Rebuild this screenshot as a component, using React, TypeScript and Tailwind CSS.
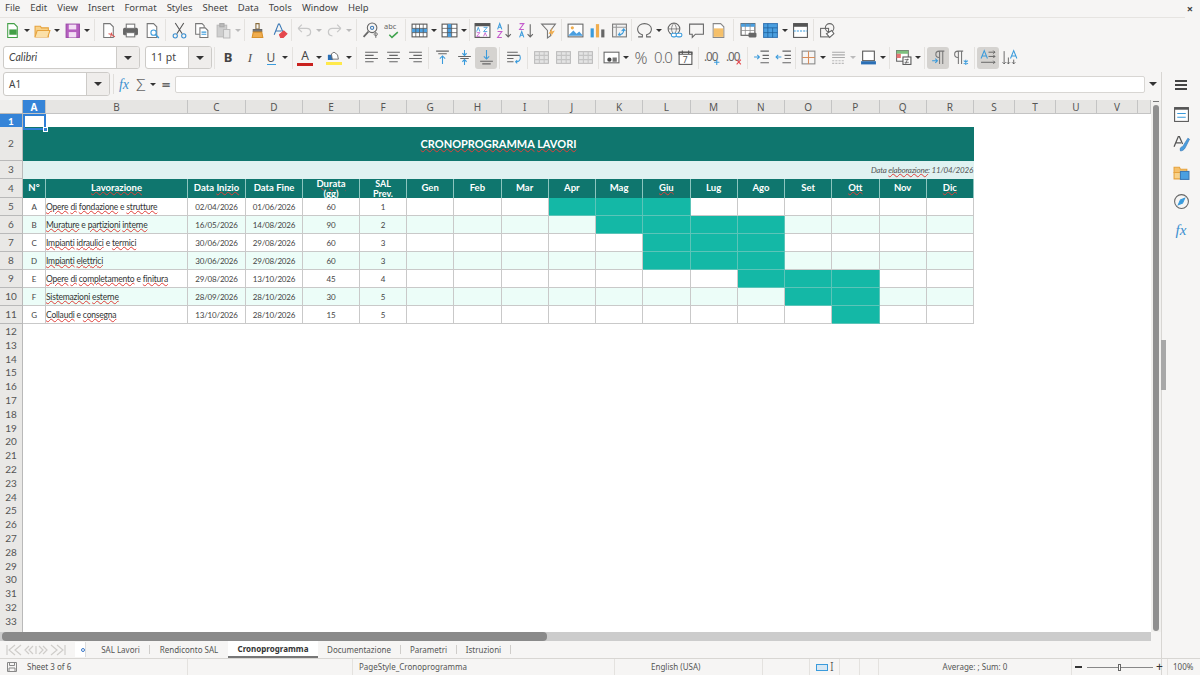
import React from 'react';

const GRID = 'grid grid-cols-[23px_23px_142px_58px_57px_57px_47px_repeat(12,47.25px)_41px_41px_41px_41px_13px]';
const LETTERS = ['A','B','C','D','E','F','G','H','I','J','K','L','M','N','O','P','Q','R','S','T','U','V',''];
const MONTHS = ['Gen','Feb','Mar','Apr','Mag','Giu','Lug','Ago','Set','Ott','Nov','Dic'];

const ROWS = [
  { n: 5, id: 'A', name: 'Opere di fondazione e strutture', start: '02/04/2026', end: '01/06/2026', days: '60', sal: '1', on: [3, 4, 5] },
  { n: 6, id: 'B', name: 'Murature e partizioni interne', start: '16/05/2026', end: '14/08/2026', days: '90', sal: '2', on: [4, 5, 6, 7] },
  { n: 7, id: 'C', name: 'Impianti idraulici e termici', start: '30/06/2026', end: '29/08/2026', days: '60', sal: '3', on: [5, 6, 7] },
  { n: 8, id: 'D', name: 'Impianti elettrici', start: '30/06/2026', end: '29/08/2026', days: '60', sal: '3', on: [5, 6, 7] },
  { n: 9, id: 'E', name: 'Opere di completamento e finitura', start: '29/08/2026', end: '13/10/2026', days: '45', sal: '4', on: [7, 8, 9] },
  { n: 10, id: 'F', name: 'Sistemazioni esterne', start: '28/09/2026', end: '28/10/2026', days: '30', sal: '5', on: [8, 9] },
  { n: 11, id: 'G', name: 'Collaudi e consegna', start: '13/10/2026', end: '28/10/2026', days: '15', sal: '5', on: [9] },
];

const EMPTY_ROWS = Array.from({ length: 22 }, (_, i) => i + 12);

const Wavy = ({ children }: { children: React.ReactNode }) => (
  <span className="underline decoration-wavy decoration-[#e0403a] decoration-[0.5px] underline-offset-0">{children}</span>
);

// the spell checker leaves the word "e" alone
const Checked = ({ text }: { text: string }) => (
  <>
    {text.split(' ').map((w, i) => (
      <React.Fragment key={i}>
        {i > 0 && ' '}
        {w === 'e' ? w : <Wavy>{w}</Wavy>}
      </React.Fragment>
    ))}
  </>
);

const Ic = ({ children }: { children: React.ReactNode }) => (
  <svg viewBox="0 0 16 16" className="w-[17px] h-[17px]" fill="none" stroke="#666" strokeWidth="1">{children}</svg>
);

const Tool = ({ active, children }: { active?: boolean; children: React.ReactNode }) => (
  <div className={`w-[22px] h-[22px] flex items-center justify-center shrink-0 rounded-[3px] ${active ? 'bg-[#d5d3d0]' : ''}`}>{children}</div>
);

const Arrow = ({ off }: { off?: boolean }) => (
  <div className="w-[8px] h-[22px] flex items-center justify-center shrink-0">
    <div className={`border-x-[3px] border-x-transparent border-t-[3px] ${off ? 'border-t-[#bbb]' : 'border-t-[#333]'}`} />
  </div>
);

const Sep = ({ className }: { className: string }) => (
  <div className={`h-[22px] flex items-center justify-center shrink-0 ${className}`}>
    <div className="w-px h-[22px] bg-[#e4e2df]" />
  </div>
);

const Grid3 = () => (
  <Ic>
    <rect x="1.5" y="2.5" width="13" height="11" fill="#e4e4e4" stroke="#bbb" />
    <path d="M1.5 6h13M1.5 10h13M6 2.5v11M10.5 2.5v11" stroke="#c4c4c4" />
  </Ic>
);

const Toolbar1 = () => (
  <div className="flex items-center h-[24px] pl-px">
    <Tool><Ic><path d="M3.5 1.5h6l3 3v10h-9z" fill="#fff" stroke="#43a047" /><rect x="5" y="7" width="7" height="5" fill="#43a047" stroke="none" /></Ic></Tool>
    <Arrow />
    <Tool><Ic><path d="M1 4h5l1 1.5h6.5V14H1z" fill="#f8d28a" stroke="#e6a23c" /><path d="M1 14l2-6h12l-2 6" fill="#fbe0a8" stroke="#e6a23c" /></Ic></Tool>
    <Arrow />
    <Tool><Ic><rect x="2" y="2" width="12.5" height="12.5" fill="#b65fc0" stroke="#9c4aa8" /><rect x="4.5" y="2.5" width="7" height="4.5" fill="#f3dff5" stroke="none" /><rect x="4.5" y="9.5" width="7" height="5" fill="#f3dff5" stroke="none" /></Ic></Tool>
    <Arrow />
    <Sep className="w-[6px]" />
    <Tool><Ic><path d="M3.5 1.5h6l3 3v10h-9z" fill="#fff" stroke="#777" /><path d="M8 11c2 0 4 1 6 3M11 10l-1 4" stroke="#d9534f" /></Ic></Tool>
    <Tool><Ic><rect x="1.5" y="6" width="13" height="6" rx="1" fill="#666" stroke="#666" /><rect x="4" y="2" width="8" height="4" fill="#fff" stroke="#777" /><rect x="4" y="10" width="8" height="4" fill="#fff" stroke="#777" /></Ic></Tool>
    <Tool><Ic><path d="M3 1.5h6l3 3v10H3z" fill="#fff" stroke="#777" /><circle cx="9" cy="10" r="2.5" stroke="#3a9bdc" /><path d="M11 12l3 3" stroke="#3a9bdc" strokeWidth="1.4" /></Ic></Tool>
    <Sep className="w-[5px]" />
    <Tool><Ic><path d="M4 1l6.5 10M12 1L5.5 11" stroke="#555" /><circle cx="4" cy="13" r="2" stroke="#3a8fd0" /><circle cx="12" cy="13" r="2" stroke="#3a8fd0" /></Ic></Tool>
    <Tool><Ic><path d="M2.5 1.5h6l2 2v8h-8z" fill="#fff" stroke="#777" /><path d="M6.5 5.5h5l2.5 2.5v6.5H6.5z" fill="#fff" stroke="#777" /><path d="M8 9.500h4.500M8 11.500h4.500" stroke="#3a9bdc" /></Ic></Tool>
    <Tool><Ic><rect x="2" y="3" width="9" height="11" fill="#cfcfcf" stroke="#bbb" /><path d="M8 7h6v8H8z" fill="#e6e6e6" stroke="#bbb" /><rect x="4.5" y="1.5" width="4" height="3" fill="#bbb" stroke="#aaa" /></Ic></Tool>
    <Arrow off />
    <Sep className="w-[4px]" />
    <Tool><Ic><path d="M6.5 1.5h3v5h-3z" stroke="#8a6d3b" /><path d="M4 7h8v2H4z" fill="#777" stroke="#666" /><path d="M4 9.500h8l1 5H3z" fill="#f0ad4e" stroke="#d8912c" /></Ic></Tool>
    <Tool><Ic><path d="M3 12L7 2h1l3.500 8M4.500 8.500h5.500" stroke="#3a78b5" /><path d="M8 12l4-3.500 3 2.500-3.500 3.500H9z" fill="#e5484d" stroke="#e5484d" /></Ic></Tool>
    <Sep className="w-[3px]" />
    <Tool><Ic><path d="M2 6l3.500-3.500M2 6l3.500 3.500M2 6h8c5 0 5 7 0 7" stroke="#c8c8c8" strokeWidth="1.2" /></Ic></Tool>
    <Arrow off />
    <Tool><Ic><path d="M14 6l-3.500-3.500M14 6l-3.500 3.500M14 6H6c-5 0-5 7 0 7" stroke="#c8c8c8" strokeWidth="1.2" /></Ic></Tool>
    <Arrow off />
    <Sep className="w-[6px]" />
    <Tool><Ic><circle cx="9.5" cy="5.5" r="4.5" stroke="#666" /><path d="M6 9l-4.500 5" stroke="#666" strokeWidth="1.6" /><circle cx="9.5" cy="5.5" r="1.5" stroke="#3a78b5" /><path d="M13 10v5M13 13a1.500 1.500 0 10-.1 0" stroke="#666" strokeWidth="0.8" /></Ic></Tool>
    <Tool><Ic><text x="0" y="7" fontSize="7" fill="#666" stroke="none">abc</text><path d="M5 12l2.500 2.500L13 9.500" stroke="#3fa34d" strokeWidth="1.4" /></Ic></Tool>
    <Sep className="w-[5px]" />
    <Tool><Ic><rect x="1" y="2" width="14" height="12" fill="#fff" stroke="#555" /><rect x="1" y="6" width="14" height="4" fill="#4a9fe0" stroke="none" /><path d="M1 6h14M1 10h14M4.500 2v12M8 2v12M11.500 2v12" stroke="#555" strokeWidth="0.7" /></Ic></Tool>
    <Arrow />
    <Tool><Ic><rect x="1" y="2" width="14" height="12" fill="#fff" stroke="#555" /><rect x="6" y="2" width="4" height="12" fill="#4a9fe0" stroke="none" /><path d="M1 6h14M1 10h14M6 2v12M10 2v12" stroke="#555" strokeWidth="0.7" /></Ic></Tool>
    <Arrow />
    <Sep className="w-[3px]" />
    <Tool><Ic><rect x="1" y="1.5" width="14" height="13" fill="#fff" stroke="#555" /><rect x="1" y="1.5" width="14" height="2.5" fill="#555" stroke="none" /><path d="M2.500 9l1.500-4 1.500 4M9 5h3.500L9 9h3.500" stroke="#3a9bdc" strokeWidth="0.8" /><path d="M2.500 10h3l-3 3.500h3M9 13.500l1.500-3.500 1.500 3.500" stroke="#c45ccc" strokeWidth="0.8" /></Ic></Tool>
    <Tool><Ic><path d="M1.500 7l2-5.500 2 5.500M2.300 5h2.400" stroke="#3a9bdc" /><path d="M1.500 9h4l-4 5.500h4" stroke="#c45ccc" /><path d="M11.500 2v12M9 11.500l2.500 2.500 2.500-2.500" stroke="#666" /></Ic></Tool>
    <Tool><Ic><path d="M1.500 1.500h4l-4 5.500h4" stroke="#c45ccc" /><path d="M1.500 14.500l2-5.500 2 5.500M2.300 12.500h2.400" stroke="#3a9bdc" /><path d="M11.500 2v12M9 11.500l2.500 2.500 2.500-2.500" stroke="#666" /></Ic></Tool>
    <Tool><Ic><path d="M1.500 2h13L10 8v5l-3 2V8z" stroke="#777" /><path d="M10 14l4-6-3 1 1-4-4 6h3z" fill="#f0ad4e" stroke="none" /></Ic></Tool>
    <Sep className="w-[5px]" />
    <Tool><Ic><rect x="1" y="2" width="14" height="12" fill="#fff" stroke="#666" /><circle cx="5" cy="5.5" r="1.5" fill="#f0ad4e" stroke="none" /><path d="M1 13l5-5 3 3 2.500-2 3.500 4z" fill="#4a9fe0" stroke="none" /></Ic></Tool>
    <Tool><Ic><rect x="1.5" y="6" width="3" height="8.5" fill="#3a9bdc" stroke="none" /><rect x="6.5" y="2" width="3" height="12.5" fill="#f0ad4e" stroke="none" /><rect x="11.5" y="7" width="3" height="7.5" fill="#666" stroke="none" /></Ic></Tool>
    <Tool><Ic><rect x="1.5" y="2" width="13" height="12" fill="#f2f2f2" stroke="#777" /><path d="M1.5 5h13M5 2v12" stroke="#999" /><path d="M7 12c3 0 5-2 5-5M10 8.500l2-2 1.500 2M8.500 10L7 12l2 1" stroke="#3a9bdc" /></Ic></Tool>
    <Sep className="w-[3px]" />
    <Tool><Ic><path d="M2 14h4v-2C3 11 1.500 9 1.500 6.500 1.500 3.500 4.500 1.500 8 1.500s6.500 2 6.500 5c0 2.500-1.500 4.500-4.500 5.500v2h4" stroke="#666" /></Ic></Tool>
    <Arrow />
    <Tool><Ic><circle cx="7.5" cy="6.5" r="5.5" stroke="#666" /><path d="M2 6.500h11M7.500 1c-3 3.500-3 7.500 0 11M7.500 1c3 3.500 3 7.500 0 11" stroke="#666" strokeWidth="0.7" /><rect x="5" y="10.5" width="5" height="3.5" rx="1.7" fill="#fff" stroke="#3a9bdc" /><rect x="9.5" y="10.5" width="5.5" height="3.5" rx="1.7" fill="#fff" stroke="#3a9bdc" /></Ic></Tool>
    <Tool><Ic><path d="M1.500 2h13v9.500H7L4 14.500v-3H1.500z" stroke="#666" /></Ic></Tool>
    <Tool><Ic><path d="M3 1.500h7l3 3v10H3z" fill="#fff" stroke="#888" /><rect x="3.5" y="6" width="9" height="8" fill="#f5c06a" stroke="none" /></Ic></Tool>
    <Sep className="w-[8px]" />
    <Tool><Ic><rect x="1" y="1.5" width="13" height="11" fill="#fff" stroke="#555" /><rect x="1" y="1.5" width="13" height="3" fill="#4a9fe0" stroke="none" /><path d="M5 1.500v11M9.500 1.500v11M1 8h13" stroke="#888" strokeWidth="0.7" /><rect x="8" y="10" width="7.5" height="4.5" rx="1" fill="#666" stroke="none" /></Ic></Tool>
    <Tool><Ic><rect x="1.5" y="1.5" width="13" height="13" fill="#4a9fe0" stroke="#3a78b5" /><path d="M5.500 1.500v13M1.500 5.500h13M10 5.500v9M1.500 10h13" stroke="#1d5f99" strokeWidth="0.7" /></Ic></Tool>
    <Arrow />
    <Tool><Ic><rect x="1.5" y="1.5" width="13" height="13" fill="#fff" stroke="#555" /><rect x="1.5" y="1.5" width="13" height="3" fill="#555" stroke="none" /><path d="M1.500 8.500h13" stroke="#3a9bdc" strokeDasharray="2 1" /></Ic></Tool>
    <Sep className="w-[5px]" />
    <Tool><Ic><rect x="1.5" y="6" width="7.5" height="8" stroke="#666" /><circle cx="10" cy="5.5" r="4" stroke="#666" /><path d="M7 11l5-3 2 3-4 3.500z" fill="#fff" stroke="#666" /></Ic></Tool>
  </div>
);

const Align = ({ d }: { d: string }) => <Tool><Ic><path d={d} stroke="#666" /></Ic></Tool>;

const Toolbar2 = () => (
  <div className="flex items-center h-[29px] pl-[3px]">
    <div className="w-[137px] h-[23px] flex bg-white border border-[#cdcbc8] rounded-[3px] overflow-hidden shrink-0">
      <div className="flex-1 pl-[5px] text-[10.5px] leading-[21px] italic font-['Lato',sans-serif] text-[#444]">Calibri</div>
      <div className="w-[23px] bg-[#efedeb] border-l border-[#cdcbc8] flex items-center justify-center"><div className="border-x-[4px] border-x-transparent border-t-[4px] border-t-[#333]" /></div>
    </div>
    <div className="w-[67px] h-[23px] ml-[5px] flex bg-white border border-[#cdcbc8] rounded-[3px] overflow-hidden shrink-0">
      <div className="flex-1 pl-[5px] text-[10.5px] leading-[21px] text-[#444]">11 pt</div>
      <div className="w-[23px] bg-[#efedeb] border-l border-[#cdcbc8] flex items-center justify-center"><div className="border-x-[4px] border-x-transparent border-t-[4px] border-t-[#333]" /></div>
    </div>
    <Sep className="w-[5px]" />
    <Tool><span className="font-bold text-[13px] text-[#444]">B</span></Tool>
    <Tool><span className="italic text-[13px] font-['Liberation_Serif',serif] text-[#555]">I</span></Tool>
    <div className="w-[20px] h-[22px] flex flex-col items-center justify-center shrink-0"><span className="text-[12px] leading-[13px] text-[#555]">U</span><div className="w-[9px] h-px bg-[#3a9bdc]" /></div>
    <Arrow />
    <Sep className="w-[6px]" />
    <div className="w-[20px] h-[22px] flex flex-col items-center justify-center shrink-0"><span className="text-[12px] leading-[14px] text-[#444]">A</span><div className="w-[16px] h-[3px] bg-[#c9211e]" /></div>
    <Arrow />
    <Tool><div className="flex flex-col items-center"><svg viewBox="0 0 16 12" className="w-[14px] h-[11px]" fill="none"><path d="M1 4h6v6H1z" fill="#2a6fb5" /><path d="M6 9l-1-6 3-2 4 3 1 5z" fill="#fff" stroke="#666" /></svg><div className="w-[16px] h-[3px] bg-[#ffe94a]" /></div></Tool>
    <Arrow />
    <Sep className="w-[7px]" />
    <Align d="M2 3h12M2 6h8M2 9h12M2 12h8" />
    <Align d="M2 3h12M4 6h8M2 9h12M4 12h8" />
    <Align d="M2 3h12M6 6h8M2 9h12M6 12h8" />
    <Sep className="w-[5px]" />
    <Tool><Ic><path d="M2 2h12M4 4.500h8" stroke="#666" /><path d="M8 14V7M5.500 9L8 6.500 10.500 9" stroke="#3a9bdc" /></Ic></Tool>
    <Tool><Ic><path d="M2 7h12M4 9h8" stroke="#666" /><path d="M8 1v5M6 4l2 2 2-2M8 15v-5M6 12l2-2 2 2" stroke="#3a9bdc" /></Ic></Tool>
    <Tool active><Ic><path d="M2 11.500h12M4 14h8" stroke="#666" /><path d="M8 1v8M5.500 7L8 9.500 10.500 7" stroke="#3a9bdc" /></Ic></Tool>
    <Sep className="w-[5px]" />
    <Tool><Ic><path d="M2 3h10M2 6h12M2 9h6M2 12h6" stroke="#666" /><path d="M14 6c1 3 0 6-3 6h-1M11.500 10.500L10 12l1.500 1.500" stroke="#3a9bdc" /></Ic></Tool>
    <Sep className="w-[6px]" />
    <Tool><Grid3 /></Tool>
    <Tool><Grid3 /></Tool>
    <Tool><Grid3 /></Tool>
    <Sep className="w-[4px]" />
    <Tool><Ic><rect x="1" y="3" width="14" height="10" fill="#fff" stroke="#666" /><circle cx="6" cy="10" r="2" fill="#444" stroke="none" /><rect x="9" y="8" width="4" height="4" fill="#777" stroke="none" /></Ic></Tool>
    <Arrow />
    <Tool><span className="text-[16px] font-light text-[#666]">%</span></Tool>
    <Tool><span className="text-[15px] font-light tracking-[-1px] text-[#666]">0.0</span></Tool>
    <Tool><Ic><rect x="2" y="3" width="12" height="11.5" fill="#fff" stroke="#555" /><path d="M2 3h12v2H2zM5 1.500v3M11 1.500v3" stroke="#555" /><text x="5.500" y="13" fontSize="8" fill="#555" stroke="none">7</text></Ic></Tool>
    <Sep className="w-[5px]" />
    <Tool><Ic><text x="0" y="11" fontSize="11" letterSpacing="-1" fill="#666" stroke="none">.00</text><path d="M12 10v5M9.500 12.500h5" stroke="#3a9bdc" /></Ic></Tool>
    <Tool><Ic><text x="0" y="11" fontSize="11" letterSpacing="-1" fill="#666" stroke="none">.00</text><path d="M10 10l4 4.500M14 10l-4 4.500" stroke="#e5484d" /></Ic></Tool>
    <Sep className="w-[5px]" />
    <Tool><Ic><path d="M7 2h8M9 6h6M9 9h6M7 13h8" stroke="#666" /><path d="M1 7.500h5M4 5.500l2 2-2 2" stroke="#3a9bdc" /></Ic></Tool>
    <Tool><Ic><path d="M7 2h8M9 6h6M9 9h6M7 13h8" stroke="#666" /><path d="M6 7.500H1M3 5.500l-2 2 2 2" stroke="#3a9bdc" /></Ic></Tool>
    <Sep className="w-[3px]" />
    <Tool><Ic><rect x="2" y="2" width="12" height="12" stroke="#888" /><path d="M8 2v12M2 8h12" stroke="#d98d5a" /></Ic></Tool>
    <Arrow />
    <Tool><Ic><path d="M2 3h12M2 5.500h12M2 8h12" stroke="#aaa" /><path d="M2 11h12M2 13.500h12" stroke="#bbb" strokeDasharray="2 1" /></Ic></Tool>
    <Arrow off />
    <Tool><Ic><rect x="2.5" y="2" width="11" height="9" fill="#fff" stroke="#555" /><rect x="1" y="11.5" width="14" height="3" fill="#2a6fb5" stroke="none" /></Ic></Tool>
    <Arrow />
    <Sep className="w-[5px]" />
    <Tool><Ic><rect x="1.5" y="1.5" width="11" height="10" fill="#fff" stroke="#666" /><rect x="1.5" y="1.5" width="11" height="3" fill="#7ec07f" stroke="none" /><rect x="1.5" y="4.5" width="4" height="4" fill="#e57373" stroke="none" /><rect x="7.5" y="7.5" width="7.5" height="7" fill="#fff" stroke="#555" /><path d="M9 10h4M9 12.500h4M12 9l-2 5" stroke="#555" strokeWidth="0.7" /></Ic></Tool>
    <Arrow />
    <Sep className="w-[5px]" />
    <Tool active><Ic><path d="M9 14V2M12 14V2M13.500 2H8.500a3 3 0 000 6H9" stroke="#777" /><path d="M2 11h5M5 9l2 2-2 2" stroke="#3a9bdc" /></Ic></Tool>
    <Tool><Ic><path d="M6 14V2M9 14V2M10.500 2H5.500a3 3 0 000 6H6" stroke="#777" /><path d="M11 11l4 3M15 11l-4 3M13 10v5" stroke="#3a9bdc" /></Ic></Tool>
    <Sep className="w-[6px]" />
    <Tool active><Ic><path d="M1 9l3-7.500L7 9M2 6.500h4" stroke="#3a9bdc" /><path d="M8 3h6M12.500 1.500L14 3l-1.500 1.500M8 7h6M12.500 5.500L14 7l-1.500 1.500M1 12.500h13M12.500 11l1.500 1.500L12.500 14" stroke="#555" strokeWidth="0.8" /></Ic></Tool>
    <Tool><Ic><path d="M8 9l3-7.500L14 9M9 6.500h4" stroke="#3a9bdc" /><path d="M2 2v12M.5 12.500L2 14l1.500-1.500M6 8v6M4.500 12.500L6 14l1.500-1.500M11 10v4M9.500 12.500L11 14l1.500-1.500" stroke="#555" strokeWidth="0.8" /></Ic></Tool>
  </div>
);

const FormulaBar = () => (
  <div className="flex items-center h-[24px] pl-[3px] pr-px">
    <div className="w-[107px] h-[24px] flex bg-white border border-[#cdcbc8] rounded-[3px] overflow-hidden shrink-0">
      <div className="flex-1 pl-[5px] text-[10px] leading-[22px] text-[#444]">A1</div>
      <div className="w-[23px] bg-[#efedeb] border-l border-[#cdcbc8] flex items-center justify-center"><div className="border-x-[4px] border-x-transparent border-t-[4px] border-t-[#333]" /></div>
    </div>
    <div className="w-px h-[20px] ml-[3px] bg-[#e0dedb] shrink-0" />
    <div className="w-[18px] ml-px text-center text-[14px] italic font-['Liberation_Serif',serif] text-[#3a8fd0] shrink-0">fx</div>
    <div className="w-[16px] text-center text-[17px] font-light leading-none text-[#666] shrink-0">Σ</div>
    <Arrow />
    <div className="w-[18px] text-center text-[15px] leading-none font-bold text-[#666] shrink-0">=</div>
    <div className="flex-1 h-[17px] bg-white border border-[#d8d6d3] rounded-[2px]" />
    <div className="w-[15px] flex justify-center shrink-0"><div className="border-x-[4px] border-x-transparent border-t-[4px] border-t-[#333]" /></div>
  </div>
);

const Sidebar = () => (
  <div className="w-[39px] shrink-0 border-l border-[#d8d6d3] flex flex-col items-center pt-[2px]">
    <div className="w-[12px] h-[22px] flex flex-col justify-center gap-[2.5px]">
      <div className="h-[1.5px] bg-[#444]" />
      <div className="h-[1.5px] bg-[#444]" />
      <div className="h-[1.5px] bg-[#444]" />
    </div>
    <div className="flex flex-col items-center gap-[12px] mt-[10px]">
      <Ic><rect x="1.5" y="1.5" width="13" height="13" fill="#fff" stroke="#555" /><rect x="1.5" y="1.5" width="13" height="2" fill="#555" stroke="none" /><path d="M4 7h8M4 10.500h8" stroke="#3a9bdc" /></Ic>
      <Ic><path d="M1 11L5 1.500h1l3 7M2.500 7.500h5" stroke="#555" strokeWidth="1.2" /><path d="M7 15c-1-3 1-4 2-4l5-8 1.500 1-4 8c-1 2-3 3-4.500 3z" fill="#4a9fe0" stroke="#3a78b5" strokeWidth="0.6" /></Ic>
      <Ic><path d="M1 3h5l1 2h6v3H1z" fill="#f5c06a" stroke="#e6a23c" /><path d="M1 8h7v6H1z" fill="#f8d28a" stroke="#e6a23c" /><rect x="7" y="7" width="8" height="7.5" fill="#4a9fe0" stroke="#3a78b5" /></Ic>
      <Ic><circle cx="8" cy="8" r="6.500" stroke="#666" /><path d="M11 5L9 9.500 5 11l2-4.500z" fill="#3a9bdc" stroke="#3a9bdc" /></Ic>
      <span className="text-[15px] leading-[17px] italic font-['Liberation_Serif',serif] text-[#3a8fd0]">fx</span>
    </div>
    <div className="w-[5px] h-[50px] absolute left-[1161px] top-[340px] bg-[#a8a8a8]" />
  </div>
);

const RowHead = ({ children, active }: { children?: React.ReactNode; active?: boolean }) => (
  <div className={`flex items-center justify-center border-r border-b border-[#b9b9b9] text-[10px] ${active ? 'bg-[#3584d8] text-white font-bold' : 'bg-[#e9e8e6] text-[#555]'}`}>{children}</div>
);

const SheetGrid = () => (
  <div className="w-[1151px] h-[532px] overflow-hidden bg-white">
    {/* column letters */}
    <div className={`${GRID} h-[14px]`}>
      <div className="bg-[#efeeec] border-r border-b border-[#b9b9b9]" />
      {LETTERS.map((l, i) => (
        <div key={i} className={`flex items-center justify-center border-r border-b border-[#c4c4c4] text-[10px] leading-none ${i === 0 ? 'bg-[#3584d8] text-white font-bold' : 'bg-[#e6e5e3] text-[#555]'}`}>{l}</div>
      ))}
    </div>
    <div className="font-['Lato',sans-serif]">
      <div className={`${GRID} h-[13px]`}>
        <RowHead active>1</RowHead>
        <div className="relative border-2 border-[#2f7fd6]">
          <div className="absolute right-[-4px] bottom-[-4px] w-[5px] h-[5px] bg-[#2f7fd6] border border-white" />
        </div>
      </div>
      <div className={`${GRID} h-[34px]`}>
        <RowHead>2</RowHead>
        <div className="col-[2/20] bg-[#0f766e] flex items-center justify-center text-white font-bold text-[11px]">
          <span><Wavy>CRONOPROGRAMMA</Wavy> <Wavy>LAVORI</Wavy></span>
        </div>
      </div>
      <div className={`${GRID} h-[18px]`}>
        <RowHead>3</RowHead>
        <div className="col-[2/20] bg-[#e0f2f1] flex items-center justify-end pr-px italic text-[8px] tracking-[-0.2px] text-[#555]">
          <span>Data <Wavy>elaborazione</Wavy>: 11/04/2026</span>
        </div>
      </div>
      <div className={`${GRID} h-[19px]`}>
        <RowHead>4</RowHead>
        {['N°', 'Lavorazione', 'Data Inizio', 'Data Fine'].map((h, i) => (
          <div key={h} className="bg-[#0f766e] border-r border-[#8cc5bf] flex items-center justify-center text-white font-bold text-[9.5px]">
            {i === 1 ? <Wavy>{h}</Wavy> : i === 2 ? <span>Data <Wavy>Inizio</Wavy></span> : h}
          </div>
        ))}
        <div className="bg-[#0f766e] border-r border-[#8cc5bf] flex flex-col items-center justify-center text-white font-bold text-[9.5px] leading-[10px] overflow-hidden">
          <Wavy>Durata</Wavy>
          <Wavy>(gg)</Wavy>
        </div>
        <div className="bg-[#0f766e] border-r border-[#8cc5bf] flex flex-col items-center justify-center text-white font-bold text-[9px] leading-[10px] overflow-hidden">
          <span>SAL</span>
          <Wavy>Prev.</Wavy>
        </div>
        {MONTHS.map((m) => (
          <div key={m} className="bg-[#0f766e] border-r border-[#8cc5bf] flex items-center justify-center text-white font-bold text-[9.5px]">
            {m === 'Giu' || m === 'Ott' || m === 'Dic' ? <Wavy>{m}</Wavy> : m}
          </div>
        ))}
      </div>
      {ROWS.map((r, idx) => {
        const bg = idx % 2 === 1 ? 'bg-[#ecfdf8]' : 'bg-white';
        const cell = `${bg} border-r border-b border-[#c9c9c9] flex items-center justify-center text-[8px] tracking-[-0.2px] text-[#444]`;
        return (
          <div key={r.n} className={`${GRID} h-[18px]`}>
            <RowHead>{r.n}</RowHead>
            <div className={cell}>{r.id}</div>
            <div className={`${bg} border-r border-b border-[#c9c9c9] flex items-center pt-px text-[8.5px] tracking-[-0.2px] text-[#333] whitespace-pre`}><span><Checked text={r.name} /></span></div>
            <div className={cell}>{r.start}</div>
            <div className={cell}>{r.end}</div>
            <div className={cell}>{r.days}</div>
            <div className={cell}>{r.sal}</div>
            {MONTHS.map((m, i) => (
              <div key={m} className={r.on.includes(i) ? 'bg-[#14b8a6] border-r border-b border-[#5cc4b8]' : `${bg} border-r border-b border-[#c9c9c9]`} />
            ))}
          </div>
        );
      })}
      {EMPTY_ROWS.map((n) => (
        <div key={n} className={`${GRID} h-[13.8px]`}>
          <RowHead>{n}</RowHead>
        </div>
      ))}
      <div className={`${GRID} h-[13.8px]`}>
        <RowHead />
      </div>
    </div>
  </div>
);

const TABS = ['SAL Lavori', 'Rendiconto SAL', 'Cronoprogramma', 'Documentazione', 'Parametri', 'Istruzioni'];
const TAB_W = ['w-[58px]', 'w-[78px]', 'w-[90px]', 'w-[83px]', 'w-[56px]', 'w-[54px]'];

const SheetNav = () => (
  <svg viewBox="0 0 60 12" className="w-[60px] h-[12px] shrink-0" fill="none" stroke="#cfcdca" strokeWidth="1.2">
    <path d="M1 1v10M9 1L3 6l6 5M15 1L9 6l6 5" />
    <path d="M23 2l-4 4 4 4M27 2l-4 4 4 4M30 2v8" />
    <path d="M33 2l4 4-4 4M37 2l4 4-4 4" />
    <path d="M45 1l6 5-6 5M51 1l6 5-6 5M59 1v10" />
  </svg>
);

const TabBar = () => (
  <div className="flex items-center h-[17px] pl-[6px] text-[8px] text-[#555]">
    <SheetNav />
    <div className="w-[11px] h-[15px] ml-[9px] bg-white border-r border-[#ddd] flex items-center justify-end shrink-0">
      <div className="w-[4px] h-[4px] rounded-full border border-[#3a78c8]" />
    </div>
    <div className="w-[6px] shrink-0" />
    {TABS.map((t, i) => (
      <div key={t} className={`h-[17px] flex items-center shrink-0 ${TAB_W[i]} ${i === 2 ? 'bg-white border-b-2 border-[#777] font-bold text-[#333]' : ''}`}>
        <span className="flex-1 text-center">{t}</span>
        {i !== 2 && i !== 1 && <div className="w-px h-[9px] bg-[#cfcdca]" />}
      </div>
    ))}
  </div>
);

const StatusBar = () => (
  <div className="flex h-[17px] border-t border-[#d8d6d3] text-[8px] text-[#555]">
    <div className="w-[188px] flex items-center pl-[6px] border-r border-[#e4e2df] shrink-0">
      <svg viewBox="0 0 12 12" className="w-[12px] h-[12px]" fill="none" stroke="#888"><path d="M1.5 1.500h9v9h-9zM3.500 1.500v3h5v-3M3 10.500v-3.500h6v3.500" /></svg>
      <span className="ml-[9px]">Sheet 3 of 6</span>
    </div>
    <div className="w-[165px] border-r border-[#e4e2df] shrink-0" />
    <div className="w-[262px] pl-[6px] leading-[16px] border-r border-[#e4e2df] shrink-0">PageStyle_Cronoprogramma</div>
    <div className="w-[148px] pl-[36px] leading-[16px] border-r border-[#e4e2df] shrink-0">English (USA)</div>
    <div className="w-[47px] border-r border-[#e4e2df] shrink-0" />
    <div className="w-[30px] flex items-center pl-[6px] border-r border-[#e4e2df] shrink-0">
      <div className="w-[12px] h-[7px] bg-[#d8e8f4] border border-[#3a9bdc] shrink-0" />
      <span className="text-[12px] leading-none text-[#333] ml-[2px] font-light">I</span>
    </div>
    <div className="w-[20px] border-r border-[#e4e2df] shrink-0" />
    <div className="w-[19px] border-r border-[#e4e2df] shrink-0" />
    <div className="w-[193px] text-center leading-[16px] border-r border-[#e4e2df] shrink-0">Average: ; Sum: 0</div>
    <div className="flex items-center w-[96px] pl-[3px] border-r border-[#e4e2df] shrink-0">
      <div className="w-[7px] h-[1.5px] bg-[#333] shrink-0" />
      <div className="w-[66px] h-px ml-[5px] bg-[#888] relative shrink-0">
        <div className="absolute left-[31px] top-[-3px] w-[3px] h-[7px] bg-white border border-[#666]" />
      </div>
      <span className="ml-[3px] text-[12px] leading-none text-[#333]">+</span>
    </div>
    <div className="flex-1 pl-[5px] leading-[16px]">100%</div>
  </div>
);

export default function App() {
  return (
    <div className="relative w-[1200px] h-[675px] overflow-hidden bg-[#f6f5f4] font-['Noto_Sans',sans-serif]">
      {/* menu bar */}
      <div className="flex items-center h-[17px] pl-[5px] pr-[7px] text-[9.5px] text-[#444] gap-[10px]">
        {['File', 'Edit', 'View', 'Insert', 'Format', 'Styles', 'Sheet', 'Data', 'Tools', 'Window', 'Help'].map((m) => (
          <span key={m}>{m}</span>
        ))}
        <span className="ml-auto text-[11px] leading-none font-bold text-[#444]">×</span>
      </div>
      <div className="h-px bg-[#e6e4e1] mr-[15px]" />
      <Toolbar1 />
      <div className="h-px" />
      <Toolbar2 />
      <div className="flex h-[605px]">
        <div className="flex-1 min-w-0 flex flex-col">
          <FormulaBar />
          <div className="h-[4px] shrink-0" />
          <div className="flex shrink-0">
            <SheetGrid />
            <div className="w-[10px] h-[532px] bg-[#f1f0ee] pt-px pl-[2px] shrink-0">
              <div className="w-[6px] h-px bg-[#777]" />
              <div className="w-[6px] h-[526px] mt-[3px] bg-[#8f8f8f] rounded-[3px]" />
            </div>
          </div>
          <div className="h-[9px] w-[1151px] bg-[#cccccc] flex shrink-0">
            <div className="w-[545px] bg-[#8a8a8a] rounded-[4px] ml-[2px]" />
          </div>
        </div>
        <Sidebar />
      </div>
      <div className="absolute left-0 right-0 top-[641px]">
        <TabBar />
        <StatusBar />
      </div>
    </div>
  );
}
